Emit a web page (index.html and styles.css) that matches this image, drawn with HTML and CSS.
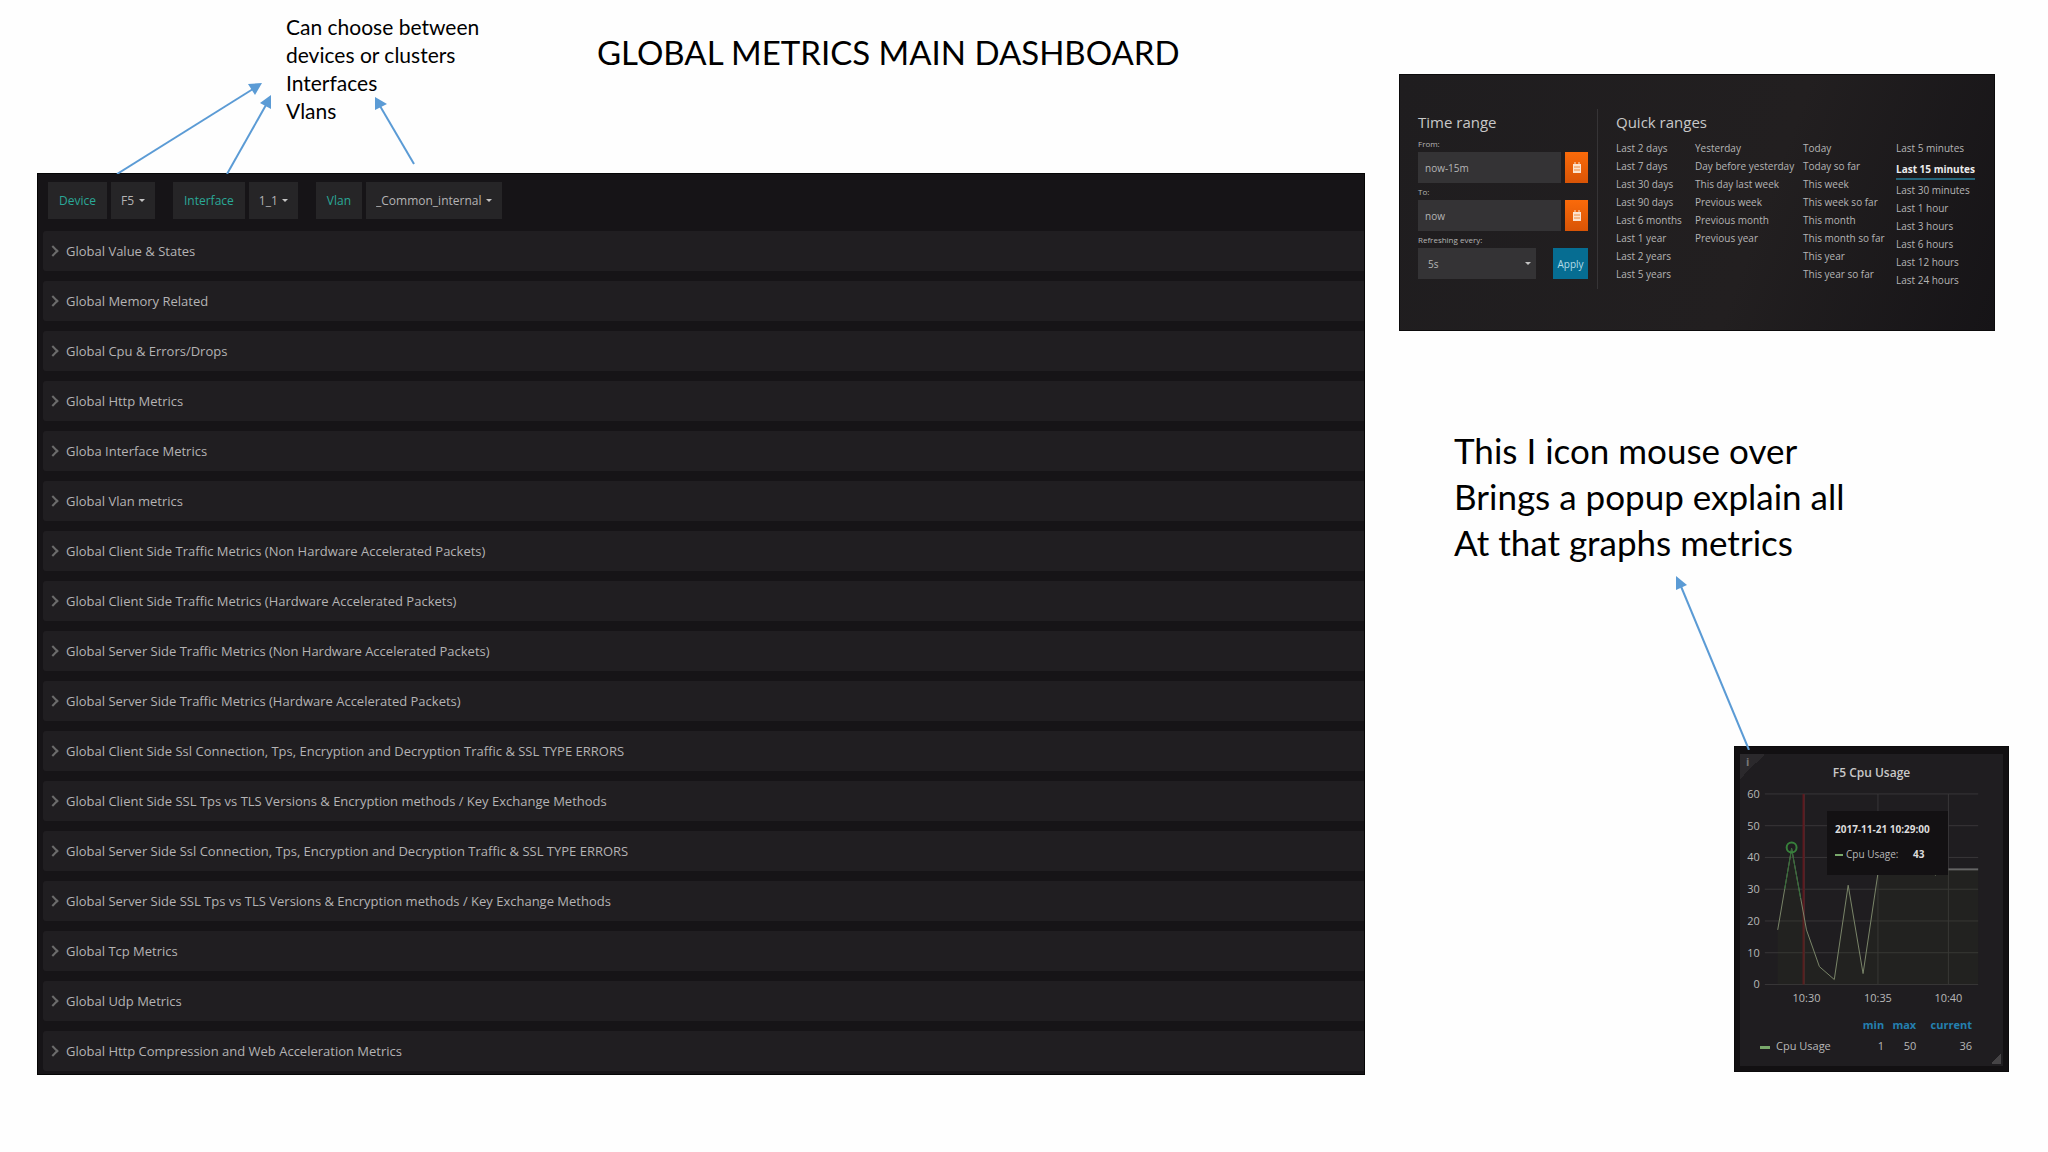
FILE: index.html
```html
<!DOCTYPE html>
<html lang="en">

<head>
  <meta charset="UTF-8">
  <meta name="viewport" content="width=device-width, initial-scale=1.0">
  <title>Global Metrics Main Dashboard</title>
  <link rel="stylesheet" href="styles.css">
</head>

<body>
  <div class="slide">
    <div class="left">
      <div class="header">
        <p class="note">Can choose between<br>devices or clusters<br>Interfaces<br>Vlans</p>
        <h1 class="title">GLOBAL METRICS MAIN DASHBOARD</h1>
        <svg class="arrows" width="420" height="174" viewBox="0 0 420 174">
          <g stroke="#5b9bd5" stroke-width="2">
            <path d="M80 174L216 89"/>
            <path d="M190 174L229 105"/>
            <path d="M377 164L343 106"/>
          </g>
          <g fill="#5b9bd5">
            <path d="M225 83L218 95L211 84Z"/>
            <path d="M234 95L234 109L223 103Z"/>
            <path d="M338 97L350 104L338 110Z"/>
          </g>
        </svg>
      </div>

      <div class="dashboard">
        <div class="toolbar">
          <div class="variable">
            <label for="device">Device</label>
            <span class="pick"><select id="device"><option>F5</option></select></span>
          </div>
          <div class="variable">
            <label for="interface">Interface</label>
            <span class="pick"><select id="interface"><option>1_1</option></select></span>
          </div>
          <div class="variable">
            <label for="vlan">Vlan</label>
            <span class="pick"><select id="vlan"><option>_Common_internal</option></select></span>
          </div>
        </div>
        <div class="rows">
          <button class="row">Global Value &amp; States</button>
          <button class="row">Global Memory Related</button>
          <button class="row">Global Cpu &amp; Errors/Drops</button>
          <button class="row">Global Http Metrics</button>
          <button class="row">Globa Interface Metrics</button>
          <button class="row">Global Vlan metrics</button>
          <button class="row">Global Client Side Traffic Metrics (Non Hardware Accelerated Packets)</button>
          <button class="row">Global Client Side Traffic Metrics (Hardware Accelerated Packets)</button>
          <button class="row">Global Server Side Traffic Metrics (Non Hardware Accelerated Packets)</button>
          <button class="row">Global Server Side Traffic Metrics (Hardware Accelerated Packets)</button>
          <button class="row">Global Client Side Ssl Connection, Tps, Encryption and Decryption Traffic &amp; SSL TYPE ERRORS</button>
          <button class="row">Global Client Side SSL Tps vs TLS Versions &amp; Encryption methods / Key Exchange Methods</button>
          <button class="row">Global Server Side Ssl Connection, Tps, Encryption and Decryption Traffic &amp; SSL TYPE ERRORS</button>
          <button class="row">Global Server Side SSL Tps vs TLS Versions &amp; Encryption methods / Key Exchange Methods</button>
          <button class="row">Global Tcp Metrics</button>
          <button class="row">Global Udp Metrics</button>
          <button class="row">Global Http Compression and Web Acceleration Metrics</button>
        </div>
      </div>
    </div>

    <div class="right">
      <div class="timepicker">
        <form class="range">
          <h2>Time range</h2>
          <label for="from">From:</label>
          <div class="field">
            <input type="text" id="from" value="now-15m">
            <button type="button" class="calendar" aria-label="Pick start date">
              <svg width="10" height="12" viewBox="0 0 10 12"><path d="M1 2h8v9H1z" fill="#fbe3cf"/><path d="M3 0v3M7 0v3" stroke="#fbe3cf"/><path d="M2 5h6M2 8h6" stroke="#f08a3c"/></svg>
            </button>
          </div>
          <label for="to">To:</label>
          <div class="field">
            <input type="text" id="to" value="now">
            <button type="button" class="calendar" aria-label="Pick end date">
              <svg width="10" height="12" viewBox="0 0 10 12"><path d="M1 2h8v9H1z" fill="#fbe3cf"/><path d="M3 0v3M7 0v3" stroke="#fbe3cf"/><path d="M2 5h6M2 8h6" stroke="#f08a3c"/></svg>
            </button>
          </div>
          <label for="refresh">Refreshing every:</label>
          <div class="field refresh">
            <span class="pick"><select id="refresh"><option>5s</option></select></span>
            <button type="button" class="apply">Apply</button>
          </div>
        </form>
        <div class="quick">
          <h2>Quick ranges</h2>
          <div class="lists">
            <ul>
              <li><a href="#">Last 2 days</a></li>
              <li><a href="#">Last 7 days</a></li>
              <li><a href="#">Last 30 days</a></li>
              <li><a href="#">Last 90 days</a></li>
              <li><a href="#">Last 6 months</a></li>
              <li><a href="#">Last 1 year</a></li>
              <li><a href="#">Last 2 years</a></li>
              <li><a href="#">Last 5 years</a></li>
            </ul>
            <ul>
              <li><a href="#">Yesterday</a></li>
              <li><a href="#">Day before yesterday</a></li>
              <li><a href="#">This day last week</a></li>
              <li><a href="#">Previous week</a></li>
              <li><a href="#">Previous month</a></li>
              <li><a href="#">Previous year</a></li>
            </ul>
            <ul>
              <li><a href="#">Today</a></li>
              <li><a href="#">Today so far</a></li>
              <li><a href="#">This week</a></li>
              <li><a href="#">This week so far</a></li>
              <li><a href="#">This month</a></li>
              <li><a href="#">This month so far</a></li>
              <li><a href="#">This year</a></li>
              <li><a href="#">This year so far</a></li>
            </ul>
            <ul>
              <li><a href="#">Last 5 minutes</a></li>
              <li class="active"><a href="#">Last 15 minutes</a></li>
              <li><a href="#">Last 30 minutes</a></li>
              <li><a href="#">Last 1 hour</a></li>
              <li><a href="#">Last 3 hours</a></li>
              <li><a href="#">Last 6 hours</a></li>
              <li><a href="#">Last 12 hours</a></li>
              <li><a href="#">Last 24 hours</a></li>
            </ul>
          </div>
        </div>
      </div>

      <p class="hint">This I icon mouse over<br>Brings a popup explain all<br>At that graphs metrics</p>

      <div class="graph">
        <svg class="pointer" width="80" height="176" viewBox="0 0 80 176">
          <path d="M5 10L74 176" stroke="#5b9bd5" stroke-width="2"/>
          <path d="M1 2L12 11L1 16Z" fill="#5b9bd5"/>
        </svg>
        <div class="panel">
          <span class="info">i</span>
          <h3>F5 Cpu Usage</h3>
          <svg class="chart" viewBox="0 0 265 222">
            <!-- grid -->
            <path d="M25 8H240M25 40H240M25 72H240M25 104H240M25 136H240M25 168H240M25 200H240" stroke="#383638"/>
            <path d="M65 8V200M139 8V200M210 8V200" stroke="#383638"/>
            <path d="M64 8V200" stroke="#5e191e" stroke-width="2"/>
            <!-- cpu usage -->
            <path d="M38 145L52 63L67 145L80 182L95 195L109 100L124 189L139 88H196L210 84H240V200H38Z" fill="#3c4a20" fill-opacity=".12"/>
            <path d="M38 145L52 63L67 145L80 182L95 195L109 100L124 189L139 88L150 40H196L197 90L201 84" fill="none" stroke="#7a8569"/>
            <path d="M45 104L52 63L61 113" fill="none" stroke="#2f6a35"/>
            <path d="M210 84H240" stroke="#656565" stroke-width="2"/>
            <circle cx="52" cy="62" r="5" fill="none" stroke="#37803b" stroke-width="2"/>
            <g class="yaxis">
              <text x="20" y="12">60</text>
              <text x="20" y="44">50</text>
              <text x="20" y="76">40</text>
              <text x="20" y="108">30</text>
              <text x="20" y="140">20</text>
              <text x="20" y="172">10</text>
              <text x="20" y="204">0</text>
            </g>
            <g class="xaxis">
              <text x="67" y="218">10:30</text>
              <text x="139" y="218">10:35</text>
              <text x="210" y="218">10:40</text>
            </g>
          </svg>
          <table class="legend">
            <thead>
              <tr><th></th><th>min</th><th>max</th><th>current</th></tr>
            </thead>
            <tbody>
              <tr><td><i class="dash"></i>Cpu Usage</td><td>1</td><td>50</td><td>36</td></tr>
            </tbody>
          </table>
          <div class="tooltip">
            <strong>2017-11-21 10:29:00</strong>
            <div class="series"><i class="dash"></i>Cpu Usage: <b>43</b></div>
          </div>
        </div>
      </div>
    </div>
  </div>
</body>

</html>
```
FILE: styles.css
```css
* {
  margin: 0;
  padding: 0;
  box-sizing: border-box;
}

body {
  background-color: #fefefe;
  color: #000;
  font-family: Lato, "Liberation Sans", sans-serif;
}

button, input, select {
  border: 0;
  border-radius: 0;
  color: inherit;
  font: inherit;
  appearance: none;
}

.slide {
  display: grid;
  grid-template-columns: 1328fr 610fr;
  gap: 34px;
  padding: 0 39px 0 37px;
}

/* annotations */
.header {
  position: relative;
  display: grid;
  grid-template-columns: 311px 1fr;
  min-height: 173px;
  padding: 13px 0 0 249px;
}

.note {
  font-size: 21px;
  line-height: 28px;
}

.title {
  padding-top: 16px;
  font-size: 33px;
  font-weight: 400;
  line-height: 46px;
}

.arrows {
  position: absolute;
  top: 0;
  left: 0;
}

.hint {
  margin: 96px 0 181px 55px;
  font-size: 35px;
  line-height: 46px;
}

/* dashboard */
.dashboard, .timepicker, .graph {
  font-family: "Open Sans", "Noto Sans", sans-serif;
}

.dashboard {
  padding: 8px 0 3px 5px;
  border: 1px solid #050505;
  background-color: #161417;
  color: #b4b3b4;
  font-size: 13px;
}

.toolbar {
  display: flex;
  gap: 18px;
  padding: 0 5px 12px;
  font-size: 12px;
}

.variable {
  display: flex;
  gap: 4px;
}

.variable label, .variable .pick {
  display: flex;
  align-items: center;
  height: 37px;
  padding: 0 10px;
  background-color: #262527;
}

.variable label {
  padding: 0 11px;
  color: #2aa897;
}

.pick select {
  background: transparent;
}

.pick::after {
  content: "";
  margin-left: 4px;
  border: 3px solid transparent;
  border-top-color: #c4c4c4;
  border-bottom: 0;
}

.rows {
  display: flex;
  flex-direction: column;
  gap: 10px;
}

.row {
  display: flex;
  align-items: center;
  height: 40px;
  padding-left: 6px;
  border-radius: 3px 0 0 3px;
  background-color: #201e21;
  text-align: left;
}

.row::before {
  content: "";
  width: 6px;
  height: 6px;
  margin-right: 9px;
  border-top: 2px solid #6c6c6c;
  border-right: 2px solid #6c6c6c;
  transform: rotate(45deg);
}

/* time picker */
.timepicker {
  display: flex;
  min-height: 257px;
  margin: 74px 14px 0 0;
  padding: 34px 0 41px 18px;
  border: 1px solid #0c0b0c;
  background: linear-gradient(110deg, #1f1d1f, #221f20 60%, #161417);
  color: #b5b5b5;
  font-size: 10px;
}

.timepicker h2 {
  color: #c8c8c8;
  font-size: 15px;
  font-weight: 400;
  line-height: 26px;
}

.range {
  width: 180px;
  padding-right: 9px;
  border-right: 1px solid #363436;
}

.range label {
  display: block;
  height: 17px;
  font-size: 8px;
  line-height: 17px;
}

.field {
  display: flex;
  gap: 4px;
  height: 31px;
}

.field input {
  flex: 1;
  min-width: 0;
  padding-left: 7px;
  background-color: #343335;
}

.calendar {
  display: grid;
  place-items: center;
  width: 23px;
  background: linear-gradient(#fa6a0a, #d85406);
}

.refresh {
  justify-content: space-between;
}

.refresh .pick {
  display: flex;
  align-items: center;
  width: 118px;
  padding: 0 5px 0 10px;
  background-color: #343335;
}

.refresh select {
  flex: 1;
}

.apply {
  width: 35px;
  background-color: #066d92;
  color: #b5dce8;
}

.quick {
  flex: 1;
  padding-left: 18px;
}

.lists {
  display: grid;
  grid-template-columns: 79px 108px 93px 1fr;
  padding-top: 4px;
}

.lists li {
  height: 18px;
  line-height: 18px;
  list-style: none;
  white-space: nowrap;
}

.lists a {
  color: inherit;
  text-decoration: none;
}

.lists .active {
  height: 24px;
  line-height: 24px;
}

.active a {
  padding-bottom: 2px;
  border-bottom: 2px solid #23647a;
  color: #ececec;
  font-weight: 700;
}

/* cpu graph */
.graph {
  position: relative;
  width: 275px;
  margin-left: auto;
  padding: 7px 5px 5px;
  border: 1px solid #0c0b0c;
  background-color: #121012;
  color: #b8b8b8;
  font-size: 11px;
}

.pointer {
  position: absolute;
  top: -173px;
  left: -60px;
}

.panel {
  position: relative;
  padding-bottom: 10px;
  background: linear-gradient(135deg, transparent 50%, #464446 50%) right 2px bottom 2px / 9px 12px no-repeat #1f1d20;
}

.info {
  position: absolute;
  top: 0;
  left: 0;
  width: 24px;
  height: 26px;
  padding-left: 6px;
  background: linear-gradient(135deg, #2b292c 50%, transparent 50%);
  color: #777;
  font-weight: 700;
}

.panel h3 {
  padding: 8px 0 2px;
  color: #c8c8c8;
  font-size: 12px;
  font-weight: 600;
  line-height: 22px;
  text-align: center;
}

.chart {
  display: block;
  width: 100%;
}

.chart text {
  fill: #b8b8b8;
}

.yaxis {
  text-anchor: end;
}

.xaxis {
  text-anchor: middle;
}

.legend {
  width: 212px;
  margin: 8px 0 0 20px;
  border-collapse: collapse;
  line-height: 21px;
  text-align: right;
}

.legend th {
  color: #2480b0;
}

.legend td:first-child {
  text-align: left;
}

.dash {
  display: inline-block;
  width: 10px;
  height: 3px;
  margin-right: 6px;
  background-color: #79a86b;
  vertical-align: middle;
}

.tooltip {
  position: absolute;
  top: 57px;
  left: 87px;
  width: 121px;
  padding: 6px 0 8px 8px;
  background-color: #131113;
  font-size: 10px;
  line-height: 25px;
  white-space: nowrap;
}

.tooltip strong, .tooltip b {
  color: #dcdcdc;
}

.tooltip .dash {
  width: 8px;
  height: 2px;
  margin-right: 3px;
}

.series b {
  margin-left: 12px;
}
```
